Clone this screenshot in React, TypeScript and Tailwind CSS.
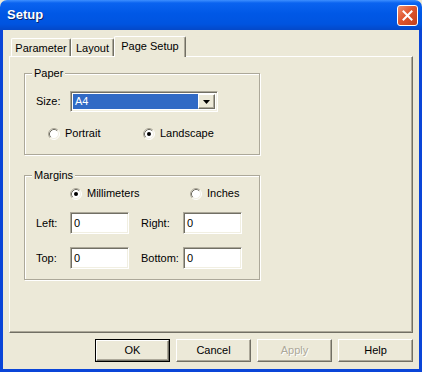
import React from 'react';

// Classic 3D bevels on the XP beige dialog
const raised =
  'border border-t-white border-l-white border-r-[#716f64] border-b-[#716f64] shadow-[inset_-1px_-1px_0_#aca899]';
const sunken =
  'border border-t-[#aca899] border-l-[#aca899] border-r-white border-b-white shadow-[inset_1px_1px_0_#716f64,inset_-1px_-1px_0_#f1efe2]';

const Radio = ({ checked }: { checked?: boolean }) => (
  <svg width="12" height="12" viewBox="0 0 12 12" className="shrink-0">
    <circle cx="6" cy="6" r="5" fill="white" />
    <path d="M2.11 9.89 A5.5 5.5 0 0 1 9.89 2.11" fill="none" stroke="#aca899" strokeWidth="1" />
    <path d="M9.89 2.11 A5.5 5.5 0 0 1 2.11 9.89" fill="none" stroke="#ffffff" strokeWidth="1" />
    <path d="M2.82 9.18 A4.5 4.5 0 0 1 9.18 2.82" fill="none" stroke="#716f64" strokeWidth="1" />
    <path d="M9.18 2.82 A4.5 4.5 0 0 1 2.82 9.18" fill="none" stroke="#f1efe2" strokeWidth="1" />
    {checked && <circle cx="6" cy="6" r="2" fill="black" />}
  </svg>
);

const RadioItem = ({ label, checked, width }: { label: string; checked?: boolean; width: string }) => (
  <div className={`flex items-center gap-[5px] ${width}`}>
    <Radio checked={checked} />
    <span>{label}</span>
  </div>
);

const Field = ({ value, width }: { value: string; width: string }) => (
  <div className={`${sunken} ${width} h-[22px] bg-white flex items-center pl-[3px]`}>{value}</div>
);

const GroupBox = ({ title, children, className }: { title: string; children: React.ReactNode; className: string }) => (
  <div
    className={`relative border border-[#aca899] shadow-[inset_1px_1px_0_white,1px_1px_0_white] ${className}`}
  >
    <span className="absolute -top-[8px] left-[7px] bg-[#ece9d8] px-[2px] leading-[14px]">{title}</span>
    {children}
  </div>
);

const Tab = ({ label, width, active }: { label: string; width: string; active?: boolean }) => (
  <div
    className={`${width} flex justify-center border-t border-l border-r border-t-white border-l-white border-r-[#716f64] shadow-[inset_-1px_0_0_#aca899] rounded-t-[2px] bg-[#ece9d8] ${
      active ? 'h-[21px] -mb-px relative z-10 items-center pb-[1px]' : 'h-[18px] items-center pt-[2px]'
    }`}
  >
    {label}
  </div>
);

const Button = ({ label, isDefault, disabled }: { label: string; isDefault?: boolean; disabled?: boolean }) => (
  <div className={`w-[75px] h-[23px] ${isDefault ? 'border border-black' : ''}`}>
    <div
      className={`${raised} w-full h-full flex items-center justify-center ${
        disabled ? 'text-[#aca899] [text-shadow:1px_1px_0_white]' : 'text-black'
      }`}
    >
      {label}
    </div>
  </div>
);

export default function App() {
  return (
    <div className="w-[422px] h-[372px] flex flex-col text-[11px] text-black font-['Liberation_Sans',Arial,sans-serif] bg-[#ece9d8]">
      {/* Title bar */}
      <div className="h-[30px] shrink-0 flex items-center justify-between rounded-t-[7px] bg-[linear-gradient(to_bottom,#3d8fff_0%,#0a63f0_10%,#0058e6_45%,#0054e0_80%,#0448c8_100%)]">
        <span className="pl-[7px] text-white font-bold text-[13px] [text-shadow:1px_1px_0_#0a246a]">Setup</span>
        <div className="mr-[4px] w-[21px] h-[21px] rounded-[3px] border border-white bg-[linear-gradient(135deg,#ee8f6d_0%,#e0562e_45%,#c2401b_100%)] flex items-center justify-center">
          <svg width="11" height="11" viewBox="0 0 11 11">
            <path d="M1.5 1.5 L9.5 9.5 M9.5 1.5 L1.5 9.5" stroke="white" strokeWidth="2" strokeLinecap="square" />
          </svg>
        </div>
      </div>

      {/* Window body */}
      <div className="flex-1 flex flex-col border-x-[3px] border-b-[3px] border-[#0a45d8] pt-[6px]">
        <div className="flex items-end h-[20px] ml-[8px]">
          <Tab label="Parameter" width="w-[60px]" />
          <Tab label="Layout" width="w-[43px]" />
          <Tab label="Page Setup" width="w-[72px]" active />
        </div>

        <div className="mx-[6px] h-[277px] border border-t-white border-l-white border-r-[#716f64] border-b-[#716f64] shadow-[inset_-1px_-1px_0_#aca899] pl-[14px] pt-[16px]">
          <GroupBox title="Paper" className="w-[236px] h-[82px] pt-[17px]">
            <div className="flex items-center pl-[11px]">
              <span className="w-[34px]">Size:</span>
              <div className={`${sunken} w-[148px] h-[21px] bg-white flex p-[2px]`}>
                <div className="flex-1 bg-[#316ac5] text-white flex items-center pl-[2px]">A4</div>
                <div className={`${raised} w-[17px] bg-[#ece9d8] flex items-center justify-center`}>
                  <svg width="7" height="4" viewBox="0 0 7 4">
                    <path d="M0 0 H7 L3.5 4 Z" fill="black" />
                  </svg>
                </div>
              </div>
            </div>
            <div className="flex items-center pl-[23px] mt-[15px] h-[13px]">
              <RadioItem label="Portrait" width="w-[95px]" />
              <RadioItem label="Landscape" checked width="w-[100px]" />
            </div>
          </GroupBox>

          <GroupBox title="Margins" className="w-[236px] h-[105px] mt-[20px] pt-[11px]">
            <div className="flex items-center pl-[45px] h-[13px]">
              <RadioItem label="Millimeters" checked width="w-[120px]" />
              <RadioItem label="Inches" width="w-[60px]" />
            </div>
            <div className="flex items-center pl-[11px] mt-[12px]">
              <span className="w-[34px]">Left:</span>
              <Field value="0" width="w-[59px]" />
              <span className="w-[42px] ml-[12px]">Right:</span>
              <Field value="0" width="w-[59px]" />
            </div>
            <div className="flex items-center pl-[11px] mt-[13px]">
              <span className="w-[34px]">Top:</span>
              <Field value="0" width="w-[59px]" />
              <span className="w-[42px] ml-[12px]">Bottom:</span>
              <Field value="0" width="w-[59px]" />
            </div>
          </GroupBox>
        </div>

        <div className="flex justify-end gap-[6px] pr-[6px] mt-[6px]">
          <Button label="OK" isDefault />
          <Button label="Cancel" />
          <Button label="Apply" disabled />
          <Button label="Help" />
        </div>
      </div>
    </div>
  );
}
